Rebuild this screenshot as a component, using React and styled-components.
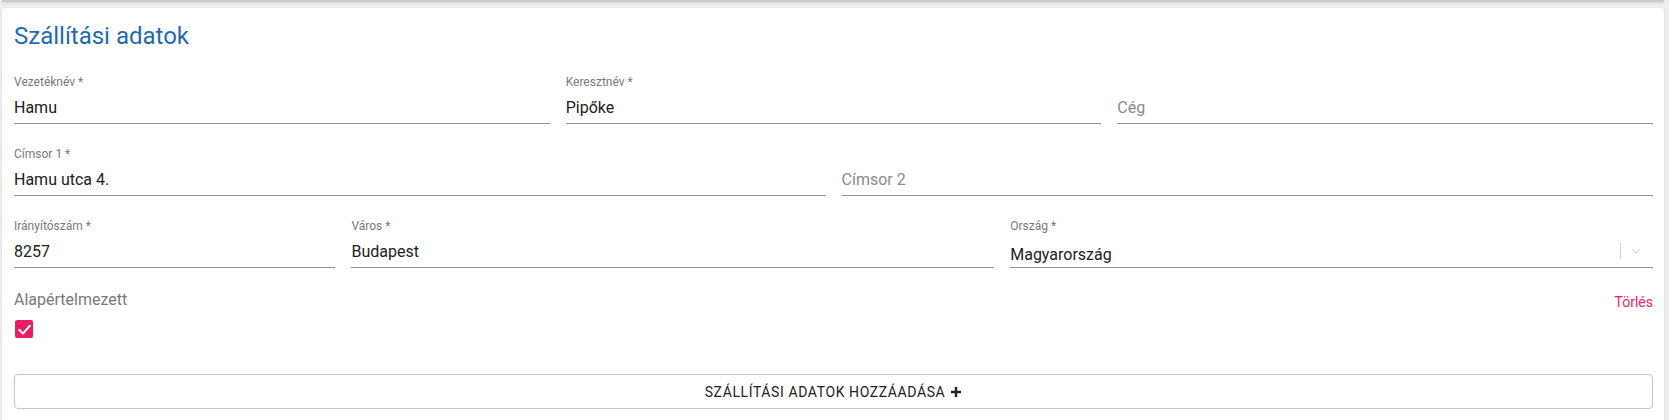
import React from 'react';
import styled, { createGlobalStyle } from 'styled-components';

const GlobalStyle = createGlobalStyle`
    html, body {
        margin: 0;
        padding: 0;
        background: #eeeeee;
        font-family: Roboto, "Liberation Sans", Arial, sans-serif;
    }
`;

const Page = () => {
    return (
        <Wrapper>
            <GlobalStyle />
            <PrevEdge />
            <Card>
                <Title>Szállítási adatok</Title>
                <Row>
                    <Field label="Vezetéknév *" value="Hamu" />
                    <Field label="Keresztnév *" value="Pipőke" />
                    <Field placeholder="Cég" />
                </Row>
                <Row>
                    <Field label="Címsor 1 *" value="Hamu utca 4." />
                    <Field placeholder="Címsor 2" />
                </Row>
                <Row>
                    <Field grow={1} label="Irányítószám *" value="8257" />
                    <Field grow={2} label="Város *" value="Budapest" />
                    <SelectField grow={2} label="Ország *" value="Magyarország" />
                </Row>
                <DefaultRow>
                    <div>
                        <DefaultLabel>Alapértelmezett</DefaultLabel>
                        <CheckBox>
                            <svg width="15" height="15" viewBox="0 0 24 24" fill="none" stroke="#fff" strokeWidth="3.2" strokeLinecap="round" strokeLinejoin="round">
                                <polyline points="3.5 12.5 9.5 18.5 20.5 6" />
                            </svg>
                        </CheckBox>
                    </div>
                    <DeleteLink>Törlés</DeleteLink>
                </DefaultRow>
                <AddButton>
                    SZÁLLÍTÁSI ADATOK HOZZÁADÁSA
                    <svg width="12" height="12" viewBox="0 0 12 12">
                        <path d="M6 1v10M1 6h10" stroke="#222" strokeWidth="2.4" />
                    </svg>
                </AddButton>
            </Card>
        </Wrapper>
    );
};

const Field = ({ label, value, placeholder, grow }) => (
    <FieldBox grow={grow}>
        <Label>{label || '\u00a0'}</Label>
        <Input>
            {value ? <Value>{value}</Value> : <Placeholder>{placeholder}</Placeholder>}
        </Input>
    </FieldBox>
);

const SelectField = ({ label, value, grow }) => (
    <FieldBox grow={grow}>
        <Label>{label}</Label>
        <SelectInput>
            <Value>{value}</Value>
            <Indicators>
                <Separator />
                <svg width="14" height="14" viewBox="0 0 20 20">
                    <path d="M4.5 7.5 10 13l5.5-5.5" fill="none" stroke="#c8c8c8" strokeWidth="1.4" />
                </svg>
            </Indicators>
        </SelectInput>
    </FieldBox>
);

export default function App() {
    return <Page />;
}

const Wrapper = styled.div`
    display: flex;
    flex-direction: column;
    height: 420px;
    overflow: hidden;
`;

const PrevEdge = styled.div`
    height: 2px;
    margin: 0 5px 0 2px;
    background: #c9c9c9;
    box-shadow: 0 1px 3px rgba(0, 0, 0, 0.12);
`;

const Card = styled.div`
    flex: 1;
    margin: 6px 5px 0 2px;
    padding: 12px 11px 0 12px;
    background: #fff;
    border-radius: 4px 4px 0 0;
    box-shadow: 0 1px 3px rgba(0, 0, 0, 0.1);
`;

const Title = styled.h2`
    margin: 0 0 22px 0;
    font-size: 24px;
    line-height: 32px;
    font-weight: 400;
    color: #1f6bb0;
`;

const Row = styled.div`
    display: flex;
    gap: 16px;
    margin-bottom: 22px;
`;

const FieldBox = styled.div`
    flex: ${(p) => p.grow || 1} 1 0;
    min-width: 0;
    display: flex;
    flex-direction: column;
`;

const Label = styled.div`
    font-size: 12px;
    line-height: 16px;
    color: #7a7a7a;
    margin-bottom: 8px;
`;

const Input = styled.div`
    height: 19px;
    padding-bottom: 6px;
    border-bottom: 1px solid #949494;
    display: flex;
    align-items: center;
`;

const SelectInput = styled(Input)`
    padding-top: 4px;
    height: 17px;
    padding-bottom: 4px;
    justify-content: space-between;
`;

const Value = styled.span`
    font-size: 16px;
    line-height: 19px;
    color: #212121;
`;

const Placeholder = styled.span`
    font-size: 16px;
    line-height: 19px;
    color: #8a8a8a;
`;

const Indicators = styled.div`
    display: flex;
    align-items: center;
    gap: 8px;
    margin-right: 10px;
    margin-top: -7px;
`;

const Separator = styled.span`
    width: 1px;
    height: 16px;
    background: #cfcfcf;
`;

const DefaultRow = styled.div`
    display: flex;
    justify-content: space-between;
    align-items: flex-start;
    margin-top: 1px;
`;

const DefaultLabel = styled.div`
    font-size: 16px;
    line-height: 19px;
    color: #7a7a7a;
    margin-bottom: 11px;
`;

const CheckBox = styled.div`
    width: 18px;
    height: 18px;
    margin-left: 1px;
    border-radius: 2px;
    background: #e91e63;
    display: flex;
    align-items: center;
    justify-content: center;
`;

const DeleteLink = styled.span`
    font-size: 14px;
    line-height: 19px;
    margin-top: 3px;
    color: #e91e63;
    cursor: pointer;
`;

const AddButton = styled.button`
    width: 100%;
    margin-top: 36px;
    height: 35px;
    display: flex;
    align-items: center;
    justify-content: center;
    gap: 5px;
    background: #fff;
    border: 1px solid #c6c6c6;
    border-radius: 4px;
    font-family: Roboto, "Liberation Sans", Arial, sans-serif;
    font-size: 14px;
    letter-spacing: 0.6px;
    color: #222;
    cursor: pointer;
`;
